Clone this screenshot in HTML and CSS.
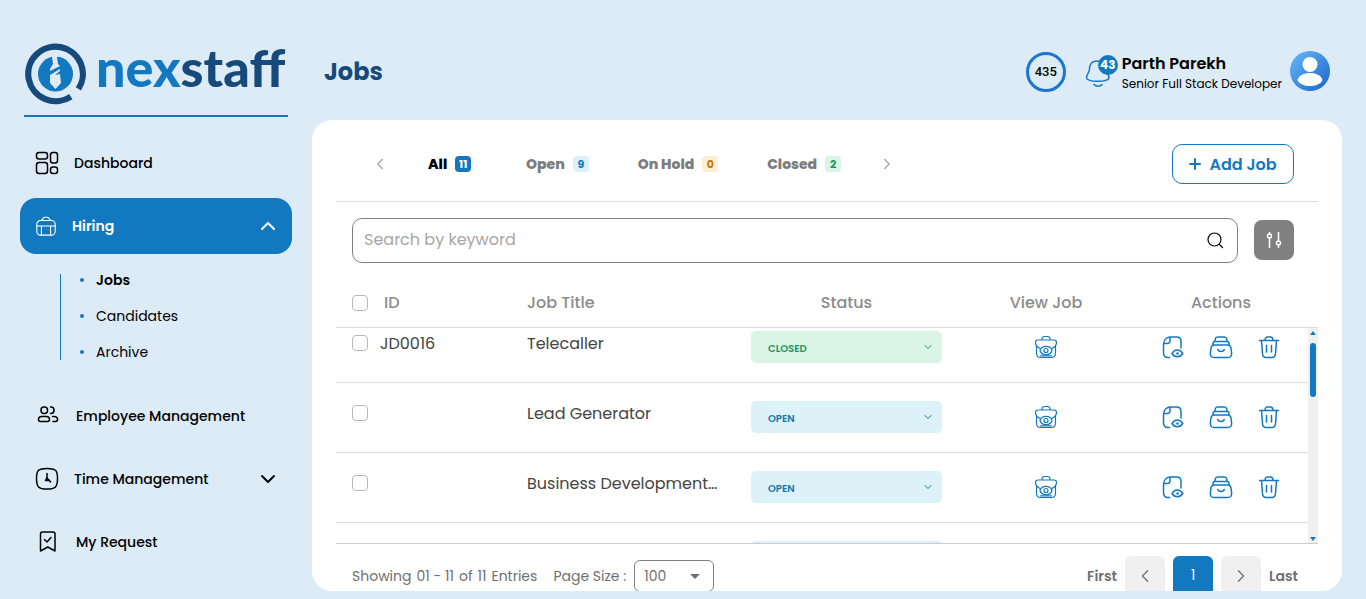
FILE: index.html
```
<!DOCTYPE html>
<html lang="en">
<head>
    <meta charset="UTF-8">
    <meta name="viewport" content="width=device-width, initial-scale=1.0">
    <title>Jobs - Nexstaff</title>
    <link rel="stylesheet" href="styles.css">
</head>
<body>

    <!-- Icons -->
    <svg class="sprite" aria-hidden="true">
        <symbol id="chevron-down" viewBox="0 0 16 16"><path d="M2 5l6 6 6-6"/></symbol>
        <symbol id="chevron-up" viewBox="0 0 16 16"><path d="M2 11l6-6 6 6"/></symbol>
        <symbol id="chevron-left" viewBox="0 0 16 16"><path d="M11 2L5 8l6 6"/></symbol>
        <symbol id="chevron-right" viewBox="0 0 16 16"><path d="M5 2l6 6-6 6"/></symbol>
        <symbol id="icon-view" viewBox="0 0 24 24">
            <path d="M8 5V4q0-2.500 2.500-2.500h3q2.500 0 2.500 2.500v1M4 5h16q2.500 0 2.500 2.500c0 2.500-1.500 4.500-4.500 6M4 5Q1.500 5 1.500 7.500c0 2.500 1.500 4.500 4.500 6M2.500 11.500v6.500q0 4.500 4 4.500h11q4 0 4-4.500v-6.500M6.500 20.800h11"/>
            <path d="M6 15.500c1.500-5.500 10.500-5.500 12 0-1.500 5.500-10.500 5.500-12 0z"/>
            <circle cx="12" cy="15.500" r="2"/>
        </symbol>
        <symbol id="icon-preview" viewBox="0 0 24 24">
            <path d="M8.500 22.500H7q-4.500 0-4.500-5V10c0-5 3-8 7.500-8h5.500q4.500 0 4.500 4.500v6.500"/>
            <path d="M3 8.500h3.500q2.500 0 2.500-3V2.200"/>
            <path d="M11 18.500c2.500-4.600 8-4.600 10.800 0-2.800 4.300-8.300 4.300-10.800 0z"/>
            <circle cx="16.500" cy="18.500" r=".6"/>
        </symbol>
        <symbol id="icon-archive" viewBox="0 0 24 24">
            <path d="M4 10V8.500q0-2 2-2h12q2 0 2 2V10M5.800 6.500L6.300 4Q6.700 2 8.500 2h7q1.800 0 2.200 2l.5 2.500"/>
            <path d="M5.500 10h13q3 0 3.500 3l.6 5q.5 4.500-4 4.500H5.400q-4.500 0-4-4.500L2 13q.5-3 3.500-3z"/>
            <path d="M8.800 14.500c.5 2.500 5.900 2.500 6.400 0"/>
        </symbol>
        <symbol id="icon-trash" viewBox="0 0 24 24">
            <path d="M2.500 5.500h19M8 5.500c0-2.300 1-3.500 2.500-3.500h3C15 2 16 3.200 16 5.500M4.500 5.500l1 13q.3 4 3.500 4h6q3.200 0 3.500-4l1-13M9.500 10.500v6.500M14.500 10.500v6.500"/>
        </symbol>
    </svg>

    <!-- Sidebar -->
    <aside class="sidebar">
        <a href="#" class="logo" aria-label="nexstaff">
            <svg class="logo-mark" viewBox="0 0 64 64">
                <path d="M54.400 47.900A27.300 27.300 0 1 0 46.800 55.600" fill="none" stroke="#174a7c" stroke-width="6.200"/>
                <circle cx="31.500" cy="33" r="17.500" fill="#1279c0"/>
                <path d="M28 16l1 7-3 5v2l10-5-2-2-1-7 2-.5-1-.5h-6zM26 34l10-6v2l-5 4 5-1 1 9-5.500 6-5.500-6z" fill="#dcebf5"/>
            </svg>
            <span class="logo-text">nex<b>staff</b></span>
        </a>

        <nav class="menu">
            <a href="#" class="menu-item">
                <svg viewBox="0 0 24 24"><rect x="1.500" y="1.500" width="11" height="6.500" rx="2.500"/><rect x="15.500" y="1.500" width="7" height="10.500" rx="2.500"/><rect x="1.500" y="11.500" width="11" height="11" rx="2.500"/><rect x="15.500" y="16" width="7" height="6.500" rx="2.500"/></svg>
                <span>Dashboard</span>
            </a>
            <a href="#" class="menu-item active">
                <svg class="thin" viewBox="0 0 24 24"><rect x="2" y="6" width="20" height="16" rx="4"/><path d="M7.500 6Q8.500 2.500 11 2.500h2q2.500 0 3.500 3.500M2 12h20M7 12v10M17 12v10"/></svg>
                <span>Hiring</span>
                <svg class="arrow"><use href="#chevron-up"/></svg>
            </a>
            <ul class="submenu">
                <li><a href="#" class="current">Jobs</a></li>
                <li><a href="#">Candidates</a></li>
                <li><a href="#">Archive</a></li>
            </ul>
            <a href="#" class="menu-item">
                <svg viewBox="0 0 24 24"><rect x="6" y="3" width="6.500" height="6.500" rx="3"/><path d="M15.500 3H16q3 0 3 3.200t-3 3.300h-.5M6.500 12.500h5q3 0 3 3 0 2-2 2h-7q-2 0-2-2 0-3 3-3zM17.500 12.500h1.500q3.500 0 3.500 3 0 2-2 2h-2.500"/></svg>
                <span class="wide">Employee Management</span>
            </a>
            <a href="#" class="menu-item">
                <svg viewBox="0 0 24 24"><path d="M12 1.500c8.500 0 10.500 1.500 10.500 10S20.500 22 12 22 1.500 20 1.500 11.500 3.500 1.500 12 1.500zM12 6.500v4M12 10.500l-1.500 3h3zM13.500 12.500l2 2.500"/></svg>
                <span>Time Management</span>
                <svg class="arrow"><use href="#chevron-down"/></svg>
            </a>
            <a href="#" class="menu-item">
                <svg viewBox="0 0 24 24"><path d="M5.500 4Q5.500 2 7.500 2h10.500q2 0 2 2v17l-7.200-4-7.300 4zM9.500 9.500l2.500 2.500 4-4.500"/></svg>
                <span class="wide">My Request</span>
            </a>
        </nav>
    </aside>

    <!-- Main Content -->
    <main class="main">
        <header class="header">
            <h1>Jobs</h1>
            <div class="points">435</div>
            <button class="bell" aria-label="Notifications">
                <svg viewBox="0 0 28 36"><path d="M12 7C6.500 7 4.500 11 4.500 15c0 4-3 5-3 8.500C2 28.500 22.500 28.500 24 24c0-4-3-5-3-9 0-5-3.500-8-9-8zM9 30.500c2 2.300 6 2.300 8 0"/></svg>
                <span class="badge">43</span>
            </button>
            <div class="user">
                <strong>Parth Parekh</strong>
                <small>Senior Full Stack Developer</small>
            </div>
            <svg class="avatar" viewBox="0 0 40 40">
                <defs><linearGradient id="avatarFill" x1="0" y1="0" x2="1" y2="1"><stop offset="0" stop-color="#6cb8f8"/><stop offset="1" stop-color="#1565cc"/></linearGradient></defs>
                <circle cx="20" cy="20" r="20" fill="url(#avatarFill)"/>
                <circle cx="20" cy="13.500" r="7.500" fill="#fff"/>
                <path d="M7.500 29C9.500 19.500 30.500 19.500 32.500 29 29 37 11 37 7.500 29z" fill="#fff"/>
            </svg>
        </header>

        <section class="card">
            <div class="tab-bar">
                <button class="tab-arrow" aria-label="Previous"><svg><use href="#chevron-left"/></svg></button>
                <div class="tabs">
                    <button class="tab selected">All <span class="count all">11</span></button>
                    <button class="tab">Open <span class="count open">9</span></button>
                    <button class="tab">On Hold <span class="count hold">0</span></button>
                    <button class="tab">Closed <span class="count closed">2</span></button>
                </div>
                <button class="tab-arrow" aria-label="Next"><svg><use href="#chevron-right"/></svg></button>
                <button class="add-button"><svg viewBox="0 0 12 12"><path d="M6 1v10M1 6h10"/></svg>Add Job</button>
            </div>

            <div class="search-row">
                <div class="search-box">
                    <input type="text" id="search" placeholder="Search by keyword" aria-label="Search by keyword">
                    <svg viewBox="0 0 18 18"><circle cx="8.500" cy="7.500" r="6.500"/><path d="M13.500 12.500l3 3"/></svg>
                </div>
                <button class="filter-button" aria-label="Filter"><svg viewBox="0 0 18 18"><path d="M4.500 1.500v1.500M4.500 7v9.500M13.500 1.500V10M13.500 14v2.500"/><circle cx="4.500" cy="5" r="2"/><circle cx="13.500" cy="12" r="2"/></svg></button>
            </div>

            <div class="table-box">
                <table class="jobs">
                    <thead>
                        <tr>
                            <th class="id-cell"><input type="checkbox" aria-label="Select all"> ID</th>
                            <th>Job Title</th>
                            <th class="center">Status</th>
                            <th class="center">View Job</th>
                            <th class="center">Actions</th>
                        </tr>
                    </thead>
                    <tbody id="jobRows"></tbody>
                </table>
                <div class="scrollbar" aria-hidden="true">
                    <i class="up"></i>
                    <div class="track"><div class="thumb" id="thumb"></div></div>
                    <i class="down"></i>
                </div>
            </div>

            <footer class="footer">
                <div class="entries"><span>Showing</span><span>01 - 11</span><span>of</span><span>11</span><span>Entries</span></div>
                <label for="pageSize">Page Size :</label>
                <div class="page-size">
                    <select id="pageSize"><option>100</option><option>50</option></select>
                    <i class="caret"></i>
                </div>
                <div class="pages">
                    <a href="#">First</a>
                    <button aria-label="Previous page"><svg><use href="#chevron-left"/></svg></button>
                    <button class="current">1</button>
                    <button aria-label="Next page"><svg><use href="#chevron-right"/></svg></button>
                    <a href="#">Last</a>
                </div>
            </footer>
        </section>
    </main>

    <script>
        const jobs = [
            { id: "JD0016", title: "Telecaller", status: "closed" },
            { id: "", title: "Lead Generator", status: "open" },
            { id: "", title: "Business Development Executive", status: "open" },
            { id: "", title: "React Developer", status: "open" },
            { id: "", title: "Node Developer", status: "open" },
            { id: "", title: "UI Designer", status: "open" },
            { id: "", title: "QA Engineer", status: "open" },
            { id: "", title: "HR Executive", status: "open" },
            { id: "", title: "Project Manager", status: "open" },
            { id: "", title: "Content Writer", status: "open" },
            { id: "", title: "Accountant", status: "closed" }
        ];
        const tbody = document.getElementById("jobRows");
        const thumb = document.getElementById("thumb");

        // Add a row for each job
        jobs.forEach(job => {
            const other = job.status === "open" ? "closed" : "open";
            const row = tbody.insertRow();
            row.innerHTML = `
                <td class="id-cell"><input type="checkbox" aria-label="Select ${job.title}"> ${job.id}</td>
                <td class="title-cell">${job.title}</td>
                <td class="status-cell">
                    <div class="status ${job.status}">
                        <select aria-label="Status"><option>${job.status.toUpperCase()}</option><option>${other.toUpperCase()}</option></select>
                        <svg><use href="#chevron-down"/></svg>
                    </div>
                </td>
                <td class="icons view"><button aria-label="View job"><svg><use href="#icon-view"/></svg></button></td>
                <td class="icons">
                    <button aria-label="Preview"><svg><use href="#icon-preview"/></svg></button>
                    <button aria-label="Archive"><svg><use href="#icon-archive"/></svg></button>
                    <button aria-label="Delete"><svg><use href="#icon-trash"/></svg></button>
                </td>
            `;
        });

        // Keep the thumb in step with the rows
        function moveThumb() {
            thumb.style.height = tbody.clientHeight / tbody.scrollHeight * 100 + "%";
            thumb.style.top = tbody.scrollTop / tbody.scrollHeight * 100 + "%";
        }
        tbody.addEventListener("scroll", moveThumb);
        window.addEventListener("resize", moveThumb);
        tbody.scrollTop = 15;
        moveThumb();
    </script>
</body>
</html>
```
FILE: styles.css
```
/* General Style */
* {
    box-sizing: border-box;
}
body {
    margin: 0;
    height: 100vh;
    display: flex;
    overflow: hidden;
    background-color: #dcebf5;
    color: #000;
    font-family: Poppins, Inter, sans-serif;
    font-size: 14px;
}
button, input, select {
    font-family: inherit;
}
button {
    padding: 0;
    border: none;
    background: none;
    cursor: pointer;
}
a {
    color: inherit;
    text-decoration: none;
}
svg {
    flex: none;
    fill: none;
    stroke: currentColor;
    stroke-width: 1.5;
    stroke-linecap: round;
    stroke-linejoin: round;
}
.sprite {
    position: absolute;
    width: 0;
    height: 0;
}

/* Sidebar */
.sidebar {
    width: 312px;
    flex: none;
    padding: 36px 20px 0;
}
.logo {
    display: flex;
    align-items: center;
    gap: 8px;
    height: 81px;
    margin: 0 4px 18px;
    padding-bottom: 6px;
    border-bottom: 2px solid #1279c0;
}
.logo-mark {
    width: 64px;
    height: 64px;
    stroke: none;
    stroke-linecap: butt;
}
.logo-text {
    padding-bottom: 12px;
    font-family: Lato, sans-serif;
    font-size: 52px;
    line-height: 60px;
    font-weight: 900;
    color: #1279c0;
}
.logo-text b {
    font-weight: 900;
    color: #174a7c;
}
.menu {
    display: flex;
    flex-direction: column;
    gap: 7px;
}
.menu-item {
    display: flex;
    align-items: center;
    gap: 15px;
    height: 56px;
    padding: 0 16px 0 15px;
    border-radius: 16px;
    font-weight: 500;
}
.menu-item svg {
    width: 24px;
    height: 24px;
}
.menu-item .thin {
    width: 22px;
    height: 22px;
    stroke-width: 1.2;
}
.menu-item .wide {
    padding-left: 2px;
}
.menu-item .arrow {
    width: 16px;
    height: 16px;
    margin-left: auto;
    stroke-width: 2;
}
.menu-item.active {
    background-color: #1279c0;
    color: #fff;
    font-weight: 600;
}
.submenu {
    position: relative;
    list-style: none;
    margin: 1px 0 11px 40px;
    padding: 0 0 0 36px;
    line-height: 36px;
}
.submenu::before {
    content: "";
    position: absolute;
    left: 0;
    top: 12px;
    bottom: 10px;
    border-left: 1px solid #1279c0;
}
.submenu li {
    position: relative;
}
.submenu li::before {
    content: "";
    position: absolute;
    left: -16px;
    top: 16px;
    width: 4px;
    height: 4px;
    border-radius: 50%;
    background-color: #1279c0;
}
.submenu .current {
    font-weight: 600;
}

/* Header */
.main {
    flex: 1;
    min-width: 0;
    display: flex;
    flex-direction: column;
    padding: 0 24px 8px 0;
}
.header {
    display: flex;
    align-items: center;
    height: 120px;
    flex: none;
    padding: 24px 12px 0;
}
.header h1 {
    margin: 0 auto 2px 0;
    font-size: 24px;
    color: #174a7c;
}
.points {
    width: 40px;
    height: 40px;
    border: 3px solid #1976d2;
    border-radius: 50%;
    line-height: 34px;
    text-align: center;
    font-family: Roboto, sans-serif;
    font-size: 13px;
    font-weight: 500;
}
.bell {
    position: relative;
    width: 28px;
    height: 36px;
    margin: 0 9px 0 19px;
    color: #1279c0;
}
.bell svg {
    width: 28px;
    height: 36px;
}
.badge {
    position: absolute;
    top: 1px;
    right: -5px;
    width: 20px;
    height: 20px;
    border-radius: 50%;
    background-color: #1279c0;
    color: #fff;
    font-size: 12px;
    font-weight: 700;
    line-height: 20px;
}
.user {
    padding-top: 3px;
}
.user strong, .user small {
    display: block;
    line-height: 20px;
}
.user strong {
    font-size: 16px;
    font-weight: 600;
}
.user small {
    font-size: 12px;
}
.avatar {
    width: 40px;
    height: 40px;
    margin: 0 0 2px 8px;
    stroke: none;
}

/* Card */
.card {
    flex: 1;
    min-height: 0;
    overflow: hidden;
    padding: 24px 24px 0;
    border-radius: 20px;
    background-color: #fff;
}
.tab-bar {
    display: flex;
    align-items: center;
    padding: 0 24px 17px 36px;
    border-bottom: 1px solid #d8dae2;
}
.tab-arrow {
    display: flex;
    color: #aaa;
}
.tab-arrow svg {
    width: 16px;
    height: 12px;
    stroke-width: 2;
}
.tabs {
    display: flex;
    gap: 49px;
    padding: 0 38px 0 40px;
}
.tab {
    display: flex;
    align-items: center;
    gap: 8px;
    min-width: 49px;
    font-size: 14px;
    font-weight: 800;
    color: #7d7d7d;
}
.tab.selected {
    color: #000;
}
.count {
    width: 16px;
    line-height: 16px;
    border-radius: 4px;
    font-size: 11px;
    font-weight: 700;
}
.count.all {
    background-color: #1279c0;
    color: #fff;
}
.count.open {
    background-color: #dcf1f8;
    color: #1279c0;
}
.count.hold {
    background-color: #ffefd2;
    color: #c27a0c;
}
.count.closed {
    background-color: #daf5e5;
    color: #1f9462;
}
.add-button {
    display: flex;
    align-items: center;
    justify-content: center;
    gap: 8px;
    width: 122px;
    height: 40px;
    margin-left: auto;
    border: 1px solid #1279c0;
    border-radius: 10px;
    color: #1279c0;
    font-size: 16px;
    font-weight: 600;
}
.add-button svg {
    width: 12px;
    height: 12px;
    stroke-width: 2;
}

/* Search */
.search-row {
    display: flex;
    align-items: flex-start;
    gap: 16px;
    margin: 16px 24px 16px 16px;
}
.search-box {
    flex: 1;
    display: flex;
    align-items: center;
    height: 45px;
    padding: 0 13px 0 11px;
    border: 1px solid #808080;
    border-radius: 10px;
}
.search-box input {
    flex: 1;
    padding: 0 0 2px;
    border: none;
    outline: none;
    font-size: 16px;
}
.search-box input::placeholder {
    color: #a6a6a6;
}
.search-box svg {
    width: 18px;
    height: 18px;
    stroke-width: 1.2;
}
.filter-button {
    display: flex;
    align-items: center;
    justify-content: center;
    width: 40px;
    height: 40px;
    margin-top: 2px;
    border-radius: 8px;
    background-color: #808080;
    color: #fff;
}
.filter-button svg {
    width: 18px;
    height: 18px;
}

/* Table Style */
.table-box {
    position: relative;
}
.jobs, .jobs thead, .jobs tbody {
    display: block;
}
.jobs tr {
    display: grid;
    grid-template-columns: 191fr 208fr 223fr 176fr 174fr;
    border-bottom: 1px solid #dcdcdc;
}
.jobs th, .jobs td {
    min-width: 0;
    padding: 0;
    text-align: left;
    font-size: 16px;
    font-weight: 400;
    line-height: 26px;
}
.jobs th {
    color: #8c8c8c;
    font-weight: 500;
    line-height: 48px;
}
.jobs thead tr {
    padding-right: 10px;
}
.jobs tbody {
    height: calc(100vh - 383px);
    padding-right: 10px;
    overflow-y: scroll;
    scrollbar-width: none;
    border-bottom: 1px solid #ccc;
    color: #444;
}
.jobs tbody tr {
    height: 70px;
    padding-top: 18px;
}
.scrollbar {
    position: absolute;
    top: 49px;
    right: 0;
    bottom: 1px;
    display: flex;
    flex-direction: column;
    align-items: center;
    justify-content: space-between;
    width: 10px;
    padding: 3px 0 2px;
    background-color: #f0f0f0;
}
.scrollbar i {
    border: 3px solid transparent;
}
.scrollbar .up {
    border-top: none;
    border-bottom: 4px solid #1279c0;
}
.scrollbar .down {
    border-bottom: none;
    border-top: 4px solid #1279c0;
}
.track {
    position: relative;
    flex: 1;
    width: 6px;
    margin: 4px 0;
}
.thumb {
    position: absolute;
    width: 6px;
    border-radius: 3px;
    background-color: #1279c0;
}
.jobs .center {
    text-align: center;
}
.jobs .id-cell {
    display: flex;
    gap: 12px;
    padding-left: 16px;
}
.jobs th.id-cell {
    gap: 16px;
    align-items: center;
}
.id-cell input {
    appearance: none;
    flex: none;
    width: 16px;
    height: 16px;
    margin: 4px 0;
    border: 1px solid #b8b8b8;
    border-radius: 4px;
    background-color: #fff;
}
.jobs .title-cell {
    padding-right: 16px;
    overflow: hidden;
    text-overflow: ellipsis;
    white-space: nowrap;
}
.jobs .status-cell {
    padding: 0 16px;
}
.status {
    position: relative;
    height: 32px;
    border-radius: 5px;
}
.status.open {
    background-color: #dcf1f8;
    color: #1279a8;
}
.status.closed {
    background-color: #daf5e5;
    color: #1f9462;
}
.status select {
    appearance: none;
    display: block;
    width: 100%;
    height: 32px;
    padding: 2px 17px 0;
    border: none;
    background: none;
    color: inherit;
    font-size: 10px;
    font-weight: 600;
}
.status svg {
    position: absolute;
    right: 10px;
    top: 12px;
    width: 8px;
    height: 8px;
    stroke-width: 2;
    pointer-events: none;
}
.icons {
    display: flex;
    justify-content: center;
    gap: 24px;
    height: 32px;
}
.icons button {
    display: flex;
    align-items: center;
    color: #1279c0;
}
.icons svg {
    width: 24px;
    height: 24px;
}
.view svg {
    stroke-width: 1.2;
}

/* Footer */
.footer {
    display: flex;
    align-items: center;
    padding: 12px 20px 12px 16px;
    color: #707070;
}
.entries {
    display: flex;
    gap: 5px;
}
.footer label {
    margin: 0 8px 0 16px;
}
.page-size {
    position: relative;
    width: 80px;
}
.page-size select {
    appearance: none;
    width: 100%;
    height: 32px;
    padding: 0 9px;
    border: 1px solid #808080;
    border-radius: 6px;
    background: none;
    color: inherit;
    font-size: 14px;
}
.caret {
    position: absolute;
    right: 14px;
    top: 14px;
    border: 5px solid transparent;
    border-top-color: #707070;
    pointer-events: none;
}
.pages {
    display: flex;
    align-items: center;
    gap: 8px;
    margin-left: auto;
    font-weight: 600;
}
.pages button {
    width: 40px;
    height: 40px;
    border-radius: 6px;
    background-color: #f0f0f0;
    color: #707070;
}
.pages svg {
    display: block;
    width: 14px;
    height: 14px;
    margin: 0 auto;
}
.pages .current {
    background-color: #1279c0;
    color: #fff;
}
```
